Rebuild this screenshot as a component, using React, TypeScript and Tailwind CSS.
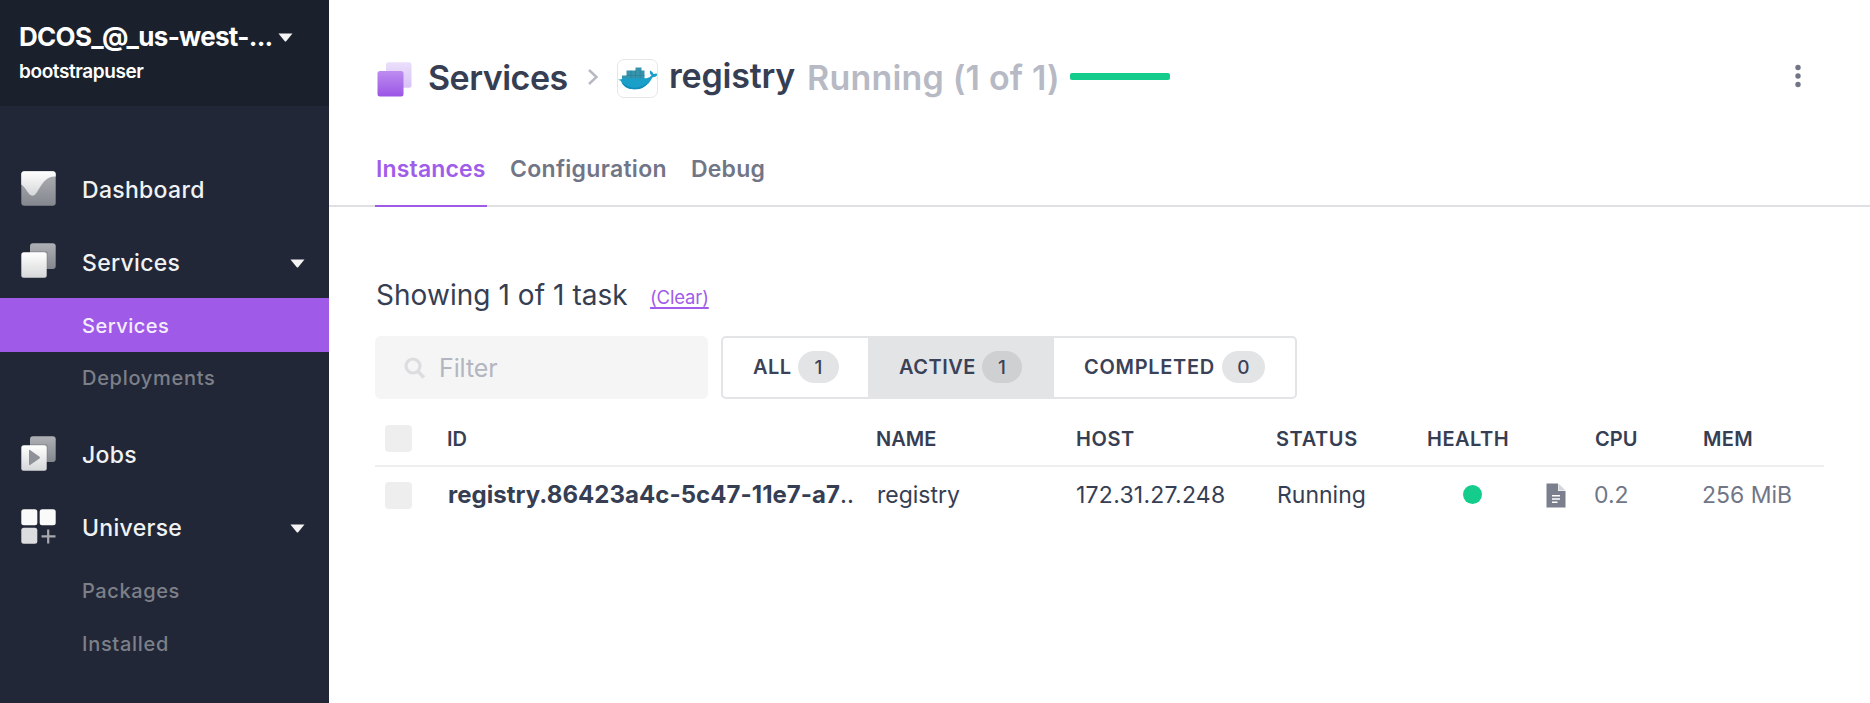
import React from 'react';

function Caret() {
  return (
    <svg width="15" height="9" viewBox="0 0 15 9" className="block shrink-0">
      <path d="M0.5 0.5H14.5L8.2 8.2Q7.5 8.9 6.8 8.2Z" fill="#f4f4f5" />
    </svg>
  );
}

function IconDefs() {
  return (
    <svg width="0" height="0" className="absolute">
      <defs>
        <linearGradient id="light" x1="0" y1="0" x2="0" y2="1">
          <stop offset="0" stopColor="#ffffff" />
          <stop offset="1" stopColor="#d6d7d9" />
        </linearGradient>
        <linearGradient id="dim" x1="0" y1="0" x2="0" y2="1">
          <stop offset="0" stopColor="#aeb0b5" />
          <stop offset="1" stopColor="#85878f" />
        </linearGradient>
        <linearGradient id="violet" x1="0" y1="0" x2="0" y2="1">
          <stop offset="0" stopColor="#bd8df0" />
          <stop offset="1" stopColor="#9b55e6" />
        </linearGradient>
        <linearGradient id="lilac" x1="0" y1="0" x2="0" y2="1">
          <stop offset="0" stopColor="#ebdffb" />
          <stop offset="1" stopColor="#d8c1f6" />
        </linearGradient>
      </defs>
    </svg>
  );
}

function DashboardIcon() {
  return (
    <svg width="35" height="35" viewBox="0 0 35 35" className="block">
      <rect x="0.3" y="0.3" width="34.4" height="34.4" rx="3" fill="url(#dim)" />
      <path d="M0.3 3.3a3 3 0 0 1 3-3h28.4a3 3 0 0 1 3 3v2.200C26 5 22 11.500 18.500 17c-2.600 4.500-4.500 7.700-7.200 7.700C7.500 24.700 5.500 17 0.300 13.500Z" fill="url(#light)" />
    </svg>
  );
}

function StackIcon({ play = false }: { play?: boolean }) {
  return (
    <svg width="35" height="35" viewBox="0 0 35 35" className="block">
      <rect x="9" y="0.300" width="25.700" height="25.700" rx="3" fill="url(#dim)" />
      <path d="M9 8h15.500a2.500 2.500 0 0 1 2.500 2.500V26H9Z" fill="#777a83" opacity="0.4" />
      <rect x="0.300" y="9.300" width="25.400" height="25.400" rx="2.500" fill="url(#light)" />
      {play && <path d="M8 14.500v14q0 1 1 .5l9.500-6.500q1-.9 0-1.800L9 14q-1-.5-1 .5Z" fill="#8f9198" />}
    </svg>
  );
}

function UniverseIcon() {
  return (
    <svg width="35" height="35" viewBox="0 0 35 35" className="block">
      <rect x="0.300" y="0.300" width="16" height="16" rx="2.500" fill="#fafafa" />
      <rect x="18.700" y="0.300" width="16" height="16" rx="2.500" fill="#fafafa" />
      <rect x="0.300" y="18.700" width="16" height="16" rx="2.500" fill="#dcdddf" />
      <path d="M27.200 20.500v14M20.500 27.300h14" stroke="#a7a9ae" strokeWidth="2.200" />
    </svg>
  );
}

function TitleIcon() {
  return (
    <svg width="35" height="35" viewBox="0 0 35 35" className="block shrink-0">
      <rect x="9" y="0.300" width="25.500" height="25.500" rx="2.500" fill="url(#lilac)" />
      <rect x="0.500" y="9" width="26" height="25.500" rx="2.500" fill="url(#violet)" />
    </svg>
  );
}

function DockerIcon() {
  return (
    <span className="block h-[39px] w-[41px] shrink-0 overflow-hidden rounded-[7px] border border-[#e6e6e8]">
      <svg width="39" height="37" viewBox="1 1 39 37" className="block">
        <path d="M5 21v-4.500h4.500v-5h9V8.500h6v3h3V21Z" fill="#3593ab" />
        <path d="M9.500 16.500h18M14 11.500V21M18.500 11.500V21M23.200 11.500V21" stroke="#2a8097" strokeWidth="0.600" />
        <path d="M1 20.500q3 .4 5-1.300h23.500q3.500-.7 5-2.700-2.500-2-1.300-5 2.800 1.300 3.200 3.500 2.300-.7 4.600-.2-1.200 3.500-5.300 3.400Q29.500 30.500 17 30.300 6 30 3.800 21.700Q2.500 21.300 1 20.500Z" fill="#1a9fc9" />
        <path d="M5 23.500q4 3.500 12 5.500 9-1 14-5.500-3.500 7-14 6.800Q8 30 5 23.500Z" fill="#0f8cba" />
      </svg>
    </span>
  );
}

function NavItem({ icon, label, caret, size }: { icon: React.ReactNode; label: string; caret?: boolean; size: string }) {
  return (
    <div className={`flex items-center pl-[21px] pr-[24px] text-[23px] font-medium leading-none tracking-[0.300px] text-[#f1f2f3] ${size}`}>
      <span className="mb-[5px] w-[61px]">{icon}</span>
      <span className="flex-1">{label}</span>
      {caret && <Caret />}
    </div>
  );
}

function Sidebar() {
  return (
    <aside className="flex w-[329px] shrink-0 flex-col bg-[#222737]">
      <div className="h-[106px] bg-[#1b212c] pt-[20px] pl-[19px] text-white">
        <div className="flex h-[34px] items-center">
          <span className="w-[259px] whitespace-nowrap text-[26px] font-bold leading-none tracking-[-0.700px]">DCOS_@_us-west-...</span>
          <Caret />
        </div>
        <div className="flex h-[35px] items-center text-[19px] font-semibold leading-none tracking-[-0.400px]">bootstrapuser</div>
      </div>
      <nav className="flex flex-col pt-[48px]">
        <NavItem size="h-[73px]" icon={<DashboardIcon />} label="Dashboard" />
        <NavItem size="h-[71px] pt-px" icon={<StackIcon />} label="Services" caret />
        <div className="flex h-[54px] items-center bg-[#9f5ae8] pt-[2px] pl-[82px] text-[20px] font-medium leading-none tracking-[0.500px] text-[#f5edfd]">Services</div>
        <div className="mb-[14px] flex h-[52px] items-center pl-[82px] text-[20px] font-medium leading-none tracking-[0.700px] text-[#7c8089]">Deployments</div>
        <NavItem size="h-[73px] pt-[2px]" icon={<StackIcon play />} label="Jobs" />
        <NavItem size="h-[73px] pt-[2px]" icon={<UniverseIcon />} label="Universe" caret />
        <div className="flex h-[53px] items-center pt-px pl-[82px] text-[20px] font-medium leading-none tracking-[0.600px] text-[#7c8089]">Packages</div>
        <div className="flex h-[53px] items-center pl-[82px] text-[20px] font-medium leading-none tracking-[0.700px] text-[#7c8089]">Installed</div>
      </nav>
    </aside>
  );
}

function Breadcrumb() {
  return (
    <div className="flex h-[40px] items-center whitespace-nowrap pl-[48px] pr-[69px] text-[34px] font-semibold leading-none text-[#363e53]">
      <span className="mt-[2px]"><TitleIcon /></span>
      <span className="ml-[16px] w-[159px] tracking-[-0.500px]">Services</span>
      <svg width="12" height="18" viewBox="0 0 12 18" className="mb-[3px] shrink-0">
        <path d="M2 2l7.500 7L2 16" fill="none" stroke="#b6b9c3" strokeWidth="2.400" />
      </svg>
      <span className="ml-[18px]"><DockerIcon /></span>
      <span className="mb-[4px] ml-[11px] w-[138px] tracking-[-0.200px]">registry</span>
      <span className="w-[263px] tracking-[0.200px] text-[#b7bac4]">Running (1 of 1)</span>
      <span className="mb-[3px] h-[7px] w-[100px] rounded-[2px] bg-[#14cd8c]" />
      <svg width="6" height="24" viewBox="0 0 6 24" className="mb-[4px] ml-auto">
        <circle cx="3" cy="3.500" r="2.700" fill="#717687" />
        <circle cx="3" cy="12" r="2.700" fill="#717687" />
        <circle cx="3" cy="20.500" r="2.700" fill="#717687" />
      </svg>
    </div>
  );
}

function Tabs() {
  return (
    <div className="mt-[34px] flex h-[75px] border-b-2 border-[#dfe0e4] pl-[46px] text-[23px] font-semibold leading-none text-[#717687]">
      <div className="-mb-[2px] flex h-[75px] w-[112px] items-center border-b-2 border-[#9f5ae8] pt-[2px] pl-px tracking-[0.150px] text-[#a05de9]">Instances</div>
      <div className="ml-[23px] flex w-[181px] items-center pt-[2px] tracking-[0.300px]">Configuration</div>
      <div className="flex items-center pt-[2px] tracking-[0.200px]">Debug</div>
    </div>
  );
}

function FilterBar() {
  return (
    <div className="flex h-[63px] gap-[13px]">
      <div className="flex w-[333px] items-center rounded-[6px] bg-[#f5f5f5] pt-px pl-[29px] text-[25px] leading-none tracking-[-0.100px] text-[#b3b6c1]">
        <svg width="22" height="23" viewBox="0 0 22 23" className="mr-[13px]">
          <circle cx="9" cy="9" r="7" fill="none" stroke="#dcdde0" strokeWidth="3.200" />
          <path d="M14 14.500l6 6" stroke="#dcdde0" strokeWidth="3.600" />
        </svg>
        Filter
      </div>
      <div className="flex w-[576px] overflow-hidden rounded-[5px] border-2 border-[#e3e4e6] text-[20px] font-semibold leading-none text-[#3b4257]">
        <div className="flex w-[145px] items-center pb-px pl-[30px]">
          <span className="w-[45px] tracking-[0.400px]">ALL</span>
          <Pill count="1" tone="w-[41px] bg-[#e3e4e6]" />
        </div>
        <div className="flex w-[186px] items-center bg-[#e3e4e6] pb-px pl-[31px]">
          <span className="w-[83px] tracking-[0.500px]">ACTIVE</span>
          <Pill count="1" tone="w-[40px] bg-[#cfd0d2]" />
        </div>
        <div className="flex items-center pb-px pl-[30px]">
          <span className="w-[138px] tracking-[0.700px]">COMPLETED</span>
          <Pill count="0" tone="w-[43px] bg-[#e3e4e6]" />
        </div>
      </div>
    </div>
  );
}

function Pill({ count, tone }: { count: string; tone: string }) {
  return <span className={`flex h-[32px] items-center justify-center rounded-full text-[19px] font-medium ${tone}`}>{count}</span>;
}

const columns = 'grid grid-cols-[72px_429px_200px_200px_150px_168px_108px_1fr] items-center';

function TaskTable() {
  return (
    <div className="w-[1449px] whitespace-nowrap leading-none text-[#363e53]">
      <div className={`${columns} h-[56px] border-b-2 border-[#eeeeef] pt-[2px] text-[20px] font-semibold`}>
        <span className="mb-px ml-[10px] h-[27px] w-[27px] rounded-[4px] bg-[#eeeeee]" />
        <span>ID</span>
        <span>NAME</span>
        <span className="tracking-[0.600px]">HOST</span>
        <span className="tracking-[0.600px]">STATUS</span>
        <span className="pl-px tracking-[0.500px]">HEALTH</span>
        <span className="pl-px">CPU</span>
        <span className="pl-px tracking-[0.300px]">MEM</span>
      </div>
      <div className={`${columns} h-[56px] text-[23px]`}>
        <span className="ml-[10px] h-[27px] w-[27px] rounded-[4px] bg-[#eeeeee]" />
        <span className="pl-px text-[24px] font-bold tracking-[0.040px]">registry.86423a4c-5c47-11e7-a7<span className="font-normal">..</span></span>
        <span className="pl-px">registry</span>
        <span className="tracking-[0.250px]">172.31.27.248</span>
        <span className="pl-px">Running</span>
        <span className="flex items-center pl-[37px]">
          <span className="mb-[2px] h-[19px] w-[19px] rounded-full bg-[#14cd8c]" />
          <svg width="20" height="25" viewBox="0 0 20 25" className="ml-[64px]">
            <path d="M0.500 0.500H12V8H19.500V24.500H0.500Z" fill="#7b7f8d" />
            <path d="M12.500 0.500L19.500 7.500H12.500Z" fill="#d3d5da" />
            <path d="M6 12.700h8M6 16h8M6 19.300h5.500" stroke="#fff" strokeWidth="1.500" />
          </svg>
        </span>
        <span className="text-[#717687]">0.2</span>
        <span className="text-[#717687]">256 MiB</span>
      </div>
    </div>
  );
}

export default function App() {
  return (
    <div className="flex h-[703px] w-[1870px] overflow-hidden bg-white font-['Inter',sans-serif]">
      <IconDefs />
      <Sidebar />
      <main className="flex min-w-0 flex-1 flex-col pt-[58px]">
        <Breadcrumb />
        <Tabs />
        <section className="flex flex-col pt-[70px] pl-[46px]">
          <div className="flex h-[36px] items-center text-[28px] leading-none text-[#363e53]">
            <span className="w-[275px] pl-px tracking-[0.050px]">Showing 1 of 1 task</span>
            <span className="mt-[5px] text-[18.500px] tracking-[-0.150px] text-[#a05de9] underline decoration-[1.500px] underline-offset-[3px]">(Clear)</span>
          </div>
          <div className="mt-[23px] mb-[12px]"><FilterBar /></div>
          <TaskTable />
        </section>
      </main>
    </div>
  );
}
